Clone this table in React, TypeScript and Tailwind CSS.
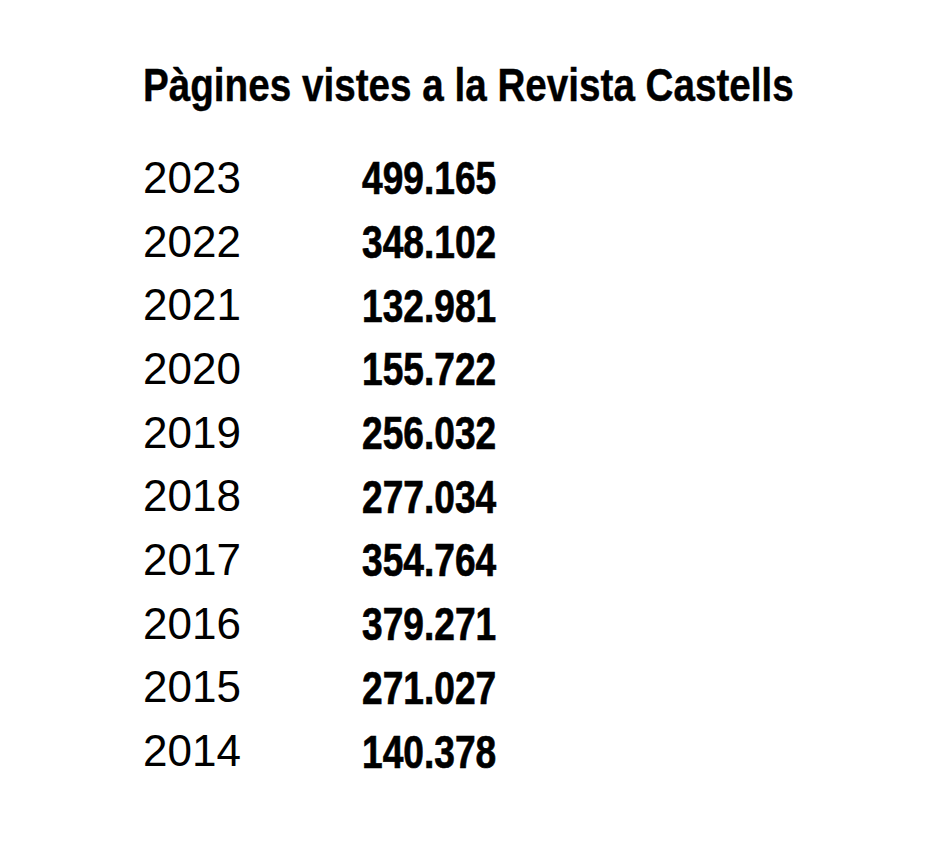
import * as React from "react";

const ROWS: [string, string][] = [
  ["2023", "499.165"],
  ["2022", "348.102"],
  ["2021", "132.981"],
  ["2020", "155.722"],
  ["2019", "256.032"],
  ["2018", "277.034"],
  ["2017", "354.764"],
  ["2016", "379.271"],
  ["2015", "271.027"],
  ["2014", "140.378"],
];

export default function App() {
  return (
    <div className="h-[845px] w-[945px] bg-white pl-[143px] pt-[61px] text-black">
      {/* condensed bold face, made by narrowing Liberation Sans Bold */}
      <h1 className="inline-block origin-left scale-x-[0.84] whitespace-nowrap font-['Liberation_Sans',sans-serif] text-[46px] font-bold leading-[48px] [-webkit-text-stroke:0.4px_black]">
        Pàgines vistes a la Revista Castells
      </h1>
      <div className="mt-[37px] flex flex-col">
        {ROWS.map(([year, views]) => (
          <div key={year} className="flex h-[63.7px] items-center">
            <span className="w-[219px] font-['Liberation_Sans',sans-serif] text-[44px] leading-none">{year}</span>
            <span className="inline-block origin-left scale-x-[0.79] font-['Liberation_Sans',sans-serif] text-[47px] font-bold leading-none [-webkit-text-stroke:0.7px_black]">{views}</span>
          </div>
        ))}
      </div>
    </div>
  );
}
